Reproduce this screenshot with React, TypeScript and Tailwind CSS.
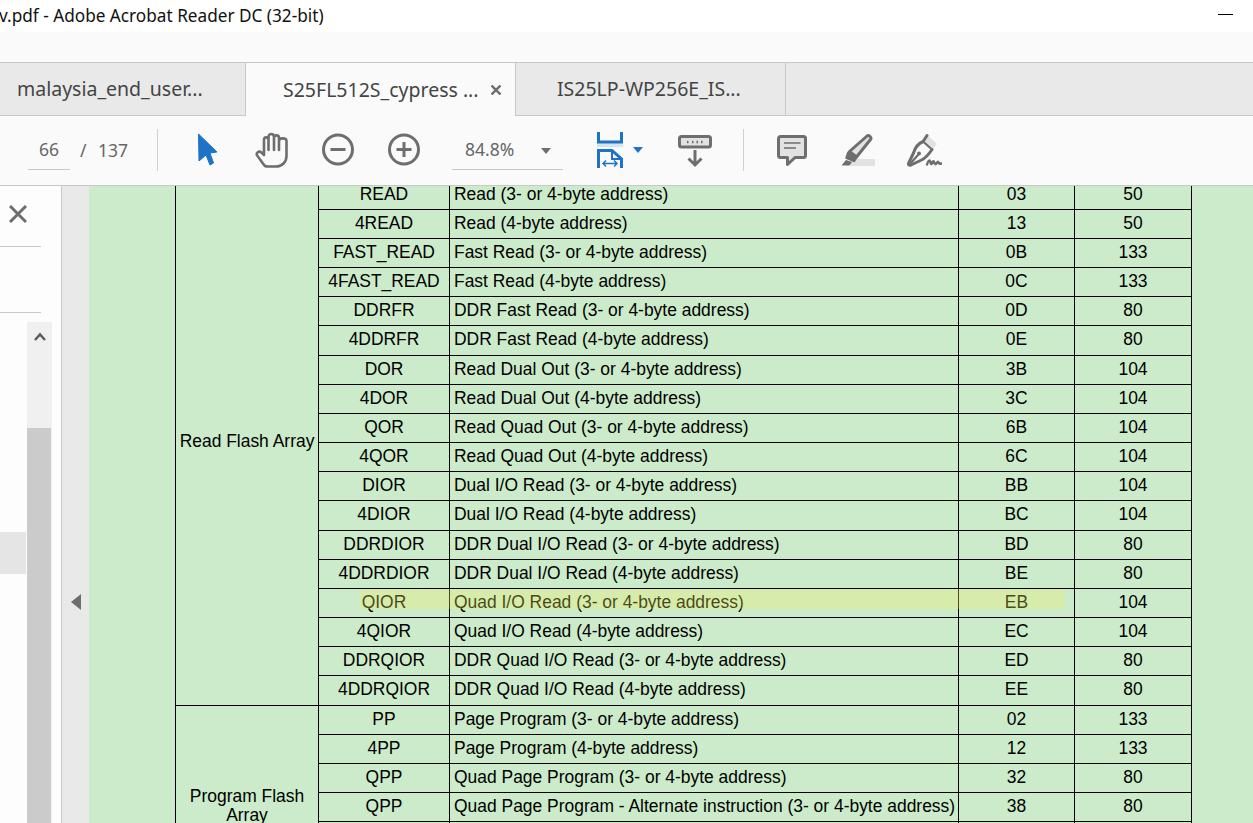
import React from "react";

type Row = { name: string; desc: string; code: string; mhz: string; tall?: boolean; group?: string; span?: number };

const rows: Row[] = [
  { name: "READ", desc: "Read (3- or 4-byte address)", code: "03", mhz: "50", group: "Read Flash Array", span: 18 },
  { name: "4READ", desc: "Read (4-byte address)", code: "13", mhz: "50" },
  { name: "FAST_READ", desc: "Fast Read (3- or 4-byte address)", code: "0B", mhz: "133" },
  { name: "4FAST_READ", desc: "Fast Read (4-byte address)", code: "0C", mhz: "133" },
  { name: "DDRFR", desc: "DDR Fast Read (3- or 4-byte address)", code: "0D", mhz: "80" },
  { name: "4DDRFR", desc: "DDR Fast Read (4-byte address)", code: "0E", mhz: "80", tall: true },
  { name: "DOR", desc: "Read Dual Out (3- or 4-byte address)", code: "3B", mhz: "104" },
  { name: "4DOR", desc: "Read Dual Out (4-byte address)", code: "3C", mhz: "104" },
  { name: "QOR", desc: "Read Quad Out (3- or 4-byte address)", code: "6B", mhz: "104" },
  { name: "4QOR", desc: "Read Quad Out (4-byte address)", code: "6C", mhz: "104" },
  { name: "DIOR", desc: "Dual I/O Read (3- or 4-byte address)", code: "BB", mhz: "104" },
  { name: "4DIOR", desc: "Dual I/O Read (4-byte address)", code: "BC", mhz: "104", tall: true },
  { name: "DDRDIOR", desc: "DDR Dual I/O Read (3- or 4-byte address)", code: "BD", mhz: "80" },
  { name: "4DDRDIOR", desc: "DDR Dual I/O Read (4-byte address)", code: "BE", mhz: "80" },
  { name: "QIOR", desc: "Quad I/O Read (3- or 4-byte address)", code: "EB", mhz: "104" },
  { name: "4QIOR", desc: "Quad I/O Read (4-byte address)", code: "EC", mhz: "104" },
  { name: "DDRQIOR", desc: "DDR Quad I/O Read (3- or 4-byte address)", code: "ED", mhz: "80" },
  { name: "4DDRQIOR", desc: "DDR Quad I/O Read (4-byte address)", code: "EE", mhz: "80", tall: true },
  { name: "PP", desc: "Page Program (3- or 4-byte address)", code: "02", mhz: "133", group: "Program Flash Array", span: 7 },
  { name: "4PP", desc: "Page Program (4-byte address)", code: "12", mhz: "133" },
  { name: "QPP", desc: "Quad Page Program (3- or 4-byte address)", code: "32", mhz: "80" },
  { name: "QPP", desc: "Quad Page Program - Alternate instruction (3- or 4-byte address)", code: "38", mhz: "80" },
  { name: "4QPP", desc: "Quad Page Program (4-byte address)", code: "34", mhz: "80" },
  { name: "PGSP", desc: "Program Suspend", code: "85", mhz: "133" },
  { name: "PGRS", desc: "Program Resume", code: "8A", mhz: "133" },
];

const GRAY = "#6e6e6e";
const BLUE = "#1e73c8";

function Cursor() {
  return (
    <svg width="20" height="40" viewBox="0 0 20 40" className="ml-[40px] shrink-0">
      <path d="M0.5 4 L19 22 L12 23 L15.5 33 L12 35 L8 25 L1 31 Z" fill={BLUE} stroke={BLUE} strokeLinejoin="round" />
    </svg>
  );
}

function Hand() {
  return (
    <svg width="34" height="40" viewBox="0 0 34 40" fill="none" stroke={GRAY} strokeWidth="2.6" strokeLinecap="round" strokeLinejoin="round" className="ml-[37px] shrink-0">
      <path d="M10 36 C7 33 5 29 2.5 26 C0.5 23.5 3.5 20 6.5 22.5 L9 25 V10 C9 6.5 13.5 6.5 13.5 10 V20 M13.5 10 V7 C13.5 3 19 3 19 7 V20 M19 8 C19 4.5 24 4.5 24 8 V20 M24 11 C24 7.5 31.5 7.5 31.5 11 V26 C31.5 32 27 36.5 21 36.5 H14 C12 36.5 11 36.5 10 36" />
    </svg>
  );
}

function Zoomer({ plus, ml }: { plus?: boolean; ml: string }) {
  return (
    <svg width="32" height="40" viewBox="0 0 32 40" fill="none" stroke={GRAY} className={`${ml} shrink-0`}>
      <circle cx="16" cy="19.5" r="14.5" strokeWidth="3" />
      <path d="M8.5 19.5 H23.5" strokeWidth="3" />
      {plus && <path d="M16 12 V27" strokeWidth="3" />}
    </svg>
  );
}

function Fit() {
  return (
    <svg width="26" height="40" viewBox="0 0 26 40" fill="none" className="ml-[34px] shrink-0">
      <rect x="0" y="13" width="26" height="4" fill="#d5e4f3" />
      <path d="M1.5 2 V12 H24.5 V2" stroke={BLUE} strokeWidth="3" />
      <path d="M1.5 38 V20.5 H15 L24.5 29 V38" stroke={BLUE} strokeWidth="3" />
      <path d="M15 20.5 V29 H24.5" stroke={BLUE} strokeWidth="2" />
      <path d="M6 33.5 H20 M9 30.5 L6 33.5 L9 36.5 M17 30.5 L20 33.5 L17 36.5" stroke={BLUE} strokeWidth="1.5" />
    </svg>
  );
}

function Caret({ color, ml }: { color: string; ml: string }) {
  return (
    <svg width="10" height="6" viewBox="0 0 10 6" className={`${ml} shrink-0`}>
      <path d="M0 0 H10 L5 6 Z" fill={color} />
    </svg>
  );
}

function Stamp() {
  return (
    <svg width="34" height="40" viewBox="0 0 34 40" fill="none" stroke={GRAY} className="ml-[35px] shrink-0">
      <rect x="1.5" y="6.5" width="31" height="10.5" rx="2" strokeWidth="3" fill="#e2e2e2" />
      <path d="M9 12 H10.5 M14 12 H15.5 M18.5 12 H20 M23 12 H24.5" strokeWidth="2.4" />
      <path d="M17 20 V35 M10.5 28.5 L17 35 L23.5 28.5" strokeWidth="3" />
    </svg>
  );
}

function Comment() {
  return (
    <svg width="30" height="40" viewBox="0 0 30 40" fill="none" stroke={GRAY} className="ml-[33px] shrink-0">
      <path d="M3.5 6.5 H26.5 A2 2 0 0 1 28.5 8.5 V25.5 A2 2 0 0 1 26.5 27.5 H18 L10.5 34.5 V27.5 H3.5 A2 2 0 0 1 1.5 25.5 V8.5 A2 2 0 0 1 3.5 6.5 Z" strokeWidth="3" fill="#e2e2e2" strokeLinejoin="round" />
      <path d="M7 13 H23.5 M7 18 H19" strokeWidth="1.6" />
    </svg>
  );
}

function Highlighter() {
  return (
    <svg width="34" height="40" viewBox="0 0 34 40" fill="none" stroke={GRAY} className="ml-[34px] shrink-0">
      <rect x="9" y="29" width="25" height="7" fill="#e2e2e2" stroke="none" />
      <path d="M26 6 C28 4.5 31 7.5 29.5 9.5 L15.5 27 L8.5 21.5 Z" strokeWidth="3" fill="#e2e2e2" strokeLinejoin="round" />
      <path d="M7.5 22 L5.5 28 L13 31 L15.5 27" strokeWidth="2.4" fill={GRAY} strokeLinejoin="round" />
      <path d="M5 30 L0.5 35.5 H8.5 L11 32 Z" fill={GRAY} stroke="none" />
    </svg>
  );
}

function Pen() {
  return (
    <svg width="35" height="40" viewBox="0 0 35 40" fill="none" stroke={GRAY} className="ml-[32px] shrink-0">
      <path d="M20 5 L30 14 L25 19.5 L16 10.5 Z" fill="#e2e2e2" stroke="none" />
      <path d="M20 5.5 L16 11.5 C10 14 8 18 6.5 23 L1.5 33.5 C1 35 2.5 35.5 4 35 L14.5 30 C19 28 22 24 25 19.5" strokeWidth="3" strokeLinejoin="round" strokeLinecap="round" />
      <path d="M16 11.5 L25 19.5 M3 34 L11 25" strokeWidth="2.2" strokeLinecap="round" />
      <circle cx="12" cy="23.5" r="2" fill={GRAY} stroke="none" />
      <path d="M20 34.5 C21.5 29.5 23 29.5 23.5 32.5 C24 35 25 34.5 26 31.5 C27 30 27.5 35 29 34 C30 33 31 30.5 31.5 32.5 C32 34 33 34 34.5 33.5" strokeWidth="2.4" strokeLinecap="round" />
    </svg>
  );
}

export default function App() {
  return (
    <div className="flex h-screen w-full flex-col overflow-hidden bg-white font-['Noto_Sans',sans-serif]">
      {/* Title bar */}
      <div className="flex h-[32px] shrink-0 items-center bg-white text-[17.2px] text-[#111]">
        <span className="-ml-[1px] flex-1 whitespace-nowrap">v.pdf - Adobe Acrobat Reader DC (32-bit)</span>
        <div className="mr-[20px] mb-[3px] h-px w-[15px] bg-black" />
      </div>
      {/* Menu bar */}
      <div className="h-[30px] shrink-0 bg-[#fafafa]" />
      {/* Tabs */}
      <div className="flex h-[54px] shrink-0 border-y border-[#c8c8c8] bg-[#e9e9e9] text-[19.5px] text-[#444]">
        <div className="flex w-[246px] items-center border-r border-[#c8c8c8] pl-[17px]">malaysia_end_user...</div>
        <div className="-mb-px flex w-[270px] items-center border-r border-[#c8c8c8] bg-[#fafafa] pl-[37px]">
          <span className="w-[208px] whitespace-nowrap">S25FL512S_cypress ...</span>
          <svg width="10" height="10" viewBox="0 0 10 10" fill="none" stroke={GRAY} strokeWidth="2.4">
            <path d="M0.5 0.5 L9.5 9.5 M9.5 0.5 L0.5 9.5" />
          </svg>
        </div>
        <div className="flex w-[270px] items-center border-r border-[#c8c8c8] pl-[41px]">IS25LP-WP256E_IS...</div>
      </div>
      {/* Toolbar */}
      <div className="flex h-[70px] shrink-0 items-start border-b border-[#c8c8c8] bg-[#fafafa] pt-[14px] text-[17.5px] text-[#666]">
        <div className="flex h-[40px] w-[157px] shrink-0 items-start pl-[28px]">
          <span className="flex h-[40px] w-[42px] items-center justify-center border-b border-[#c8c8c8]">66</span>
          <span className="ml-[10px] flex h-[40px] w-[18px] items-center">/</span>
          <span className="flex h-[40px] items-center">137</span>
        </div>
        <div className="-mt-px h-[42px] w-px shrink-0 bg-[#d0d0d0]" />
        <Cursor />
        <Hand />
        <Zoomer ml="ml-[33px]" />
        <Zoomer plus ml="ml-[34px]" />
        <div className="ml-[32px] flex h-[40px] w-[111px] shrink-0 items-center border-b border-[#c8c8c8] pl-[13px]">
          <span className="w-[76px]">84.8%</span>
          <Caret color="#6e6e6e" ml="ml-0 mt-[2px]" />
        </div>
        <Fit />
        <div className="flex h-[40px] shrink-0 items-center">
          <Caret color={BLUE} ml="ml-[10px]" />
        </div>
        <Stamp />
        <div className="-mt-px ml-[31px] h-[42px] w-px shrink-0 bg-[#d0d0d0]" />
        <Comment />
        <Highlighter />
        <Pen />
      </div>
      {/* Main */}
      <div className="flex min-h-0 flex-1">
        {/* Side panel */}
        <div className="flex w-[62px] shrink-0 flex-col border-r border-[#c8c8c8] bg-[#fdfdfd]">
          <div className="h-[61px] w-[41px] shrink-0 border-b border-[#c8c8c8] pl-[9px] pt-[19px]">
            <svg width="18" height="18" viewBox="0 0 18 18" fill="none" stroke={GRAY} strokeWidth="3">
              <path d="M1 1 L17 17 M17 1 L1 17" />
            </svg>
          </div>
          <div className="h-[66px] w-[41px] shrink-0 border-b border-[#c8c8c8]" />
          <div className="mt-[9px] flex min-h-0 flex-1">
            <div className="w-[27px] shrink-0">
              <div className="mt-[210px] h-[42px] w-[26px] bg-[#e5e5e5]" />
            </div>
            <div className="flex w-[25px] shrink-0 flex-col bg-[#f0f0f0]">
              <div className="flex h-[106px] shrink-0 justify-center pt-[10px]">
                <svg width="12" height="9" viewBox="0 0 12 9" fill="none" stroke="#5f5f5f" strokeWidth="2.6">
                  <path d="M1 8 L6 2.5 L11 8" />
                </svg>
              </div>
              <div className="w-[24px] flex-1 bg-[#cbcbcb]" />
            </div>
          </div>
        </div>
        {/* Gutter */}
        <div className="flex w-[27px] shrink-0 items-center justify-center bg-[#e9e9e9] pt-[194px]">
          <svg width="10" height="16" viewBox="0 0 10 16">
            <path d="M10 0 V16 L0 8 Z" fill={GRAY} />
          </svg>
        </div>
        {/* Page */}
        <div className="min-w-0 flex-1 overflow-hidden bg-[#ccebca] font-['Liberation_Sans',sans-serif] text-[17.45px] leading-[19px] text-black">
          <div className="relative -mt-[6px] ml-[86px] w-[1017px]">
            <table className="w-[1017px] table-fixed border-collapse">
              <colgroup>
                <col className="w-[143px]" />
                <col className="w-[131px]" />
                <col className="w-[509px]" />
                <col className="w-[116px]" />
                <col className="w-[117px]" />
              </colgroup>
              <tbody>
                {rows.map((r, i) => (
                  <tr key={i} className={r.tall ? "h-[30px]" : "h-[29px]"}>
                    {r.group && (
                      <td rowSpan={r.span} className="border border-black p-0 pb-[3px] text-center align-middle">
                        {r.group}
                      </td>
                    )}
                    <td className="border border-black p-0 pb-[2px] text-center align-middle">{r.name}</td>
                    <td className="whitespace-nowrap border border-black pb-[2px] pl-[4px] pr-0 pt-0 align-middle">{r.desc}</td>
                    <td className="border border-black p-0 pb-[2px] text-center align-middle">{r.code}</td>
                    <td className="border border-black p-0 pb-[2px] text-center align-middle">{r.mhz}</td>
                  </tr>
                ))}
              </tbody>
            </table>
            {/* Search highlight */}
            <div className="absolute left-[185px] top-[409px] h-[20px] w-[705px] rounded-r-[3px] bg-[#f3f060]/30" />
          </div>
        </div>
      </div>
    </div>
  );
}
